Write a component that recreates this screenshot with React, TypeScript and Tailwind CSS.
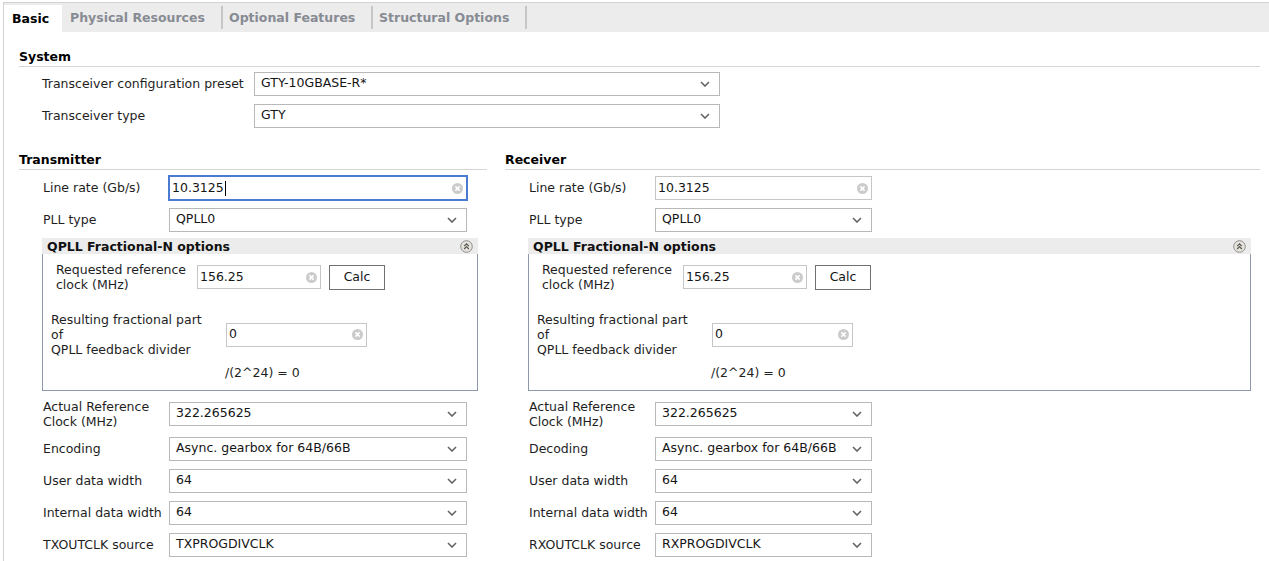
import React from 'react';

function Chevron() {
  return (
    <svg width="10" height="6" viewBox="0 0 10 6" className="shrink-0">
      <path d="M1 1 L5 5 L9 1" fill="none" stroke="#646464" strokeWidth="1.6" />
    </svg>
  );
}

function ClearIcon() {
  return (
    <svg width="11" height="11" viewBox="0 0 11 11" className="shrink-0">
      <circle cx="5.5" cy="5.5" r="5.5" fill="#cbcbcb" />
      <path d="M3.4 3.4 L7.6 7.6 M7.6 3.4 L3.4 7.6" stroke="#fff" strokeWidth="1.6" />
    </svg>
  );
}

function CollapseIcon() {
  return (
    <svg width="13" height="13" viewBox="0 0 13 13" className="shrink-0">
      <circle cx="6.5" cy="6.5" r="5.8" fill="#e6e3dc" stroke="#8e8e8e" strokeWidth="1" />
      <path d="M4.2 6.2 L6.5 3.9 L8.8 6.2 M4.2 9 L6.5 6.7 L8.8 9" fill="none" stroke="#555" strokeWidth="1.2" />
    </svg>
  );
}

function Select({ value, className }: { value: string; className: string }) {
  return (
    <div className={`h-[24px] flex items-center justify-between border border-[#b8b8b8] bg-white pl-[6px] pr-[9px] ${className}`}>
      <span className="text-[#151515] whitespace-nowrap pb-[1px]">{value}</span>
      <Chevron />
    </div>
  );
}

function TextInput({ value, className, focused }: { value: string; className: string; focused?: boolean }) {
  return (
    <div
      className={`h-[24px] flex items-center justify-between bg-white pl-[2px] pr-[3px] border ${
        focused ? 'border-[#4a7bd0] ring-1 ring-[#4a7bd0]' : 'border-[#c6c6c6]'
      } ${className}`}
    >
      <span className="flex items-center text-[#151515]">
        {value}
        {focused && <span className="ml-[1px] w-[1px] h-[15px] bg-black" />}
      </span>
      <ClearIcon />
    </div>
  );
}

function Header({ children, className = '' }: { children: React.ReactNode; className?: string }) {
  return (
    <div className={`border-b border-[#d6d6d6] pt-[1px] pb-[2px] font-bold leading-[15px] text-black ${className}`}>
      {children}
    </div>
  );
}

function Row({ label, labelW, children, tall }: { label: React.ReactNode; labelW: string; children: React.ReactNode; tall?: boolean }) {
  return (
    <div className={`flex items-center ${tall ? 'h-[30px]' : 'h-[24px]'}`}>
      <div className={`${labelW} leading-[15px] shrink-0 whitespace-nowrap pb-[1px]`}>{label}</div>
      {children}
    </div>
  );
}

function Side({ title, w, enc, encLabel, outLabel, outValue, focused }: {
  title: string;
  w: string;
  enc: string;
  encLabel: string;
  outLabel: string;
  outValue: string;
  focused?: boolean;
}) {
  return (
    <div className="flex flex-col">
      <Header>{title}</Header>
      <div className="mt-[6px] pl-[24px] flex flex-col gap-[8px]">
        <Row label="Line rate (Gb/s)" labelW="w-[126px]">
          <TextInput value="10.3125" className={w} focused={focused} />
        </Row>
        <Row label="PLL type" labelW="w-[126px]">
          <Select value="QPLL0" className={w} />
        </Row>
      </div>

      <div className="mt-[6px] ml-[23px] mr-[9px]">
        <div className="h-[16px] bg-[#ececec] flex items-center justify-between pl-[5px] pr-[5px]">
          <span className="font-bold leading-[16px] pt-[2px] text-[#111]">QPLL Fractional-N options</span>
          <CollapseIcon />
        </div>
        <div className="border-x border-b border-[#8d98ab] pt-[8px] pb-[10px]">
          <div className="flex items-center h-[30px] pl-[13px]">
            <div className="w-[141px] leading-[15px] shrink-0 whitespace-nowrap">
              Requested reference
              <br />
              clock (MHz)
            </div>
            <TextInput value="156.25" className="w-[124px] h-[23px]" />
            <div className="ml-[8px] w-[56px] h-[25px] border border-[#707070] bg-white flex items-center justify-center text-[#151515]">
              Calc
            </div>
          </div>
          <div className="mt-[20px] flex items-center h-[45px] pl-[8px]">
            <div className="w-[175px] leading-[15px] shrink-0 whitespace-nowrap">
              Resulting fractional part
              <br />
              of
              <br />
              QPLL feedback divider
            </div>
            <TextInput value="0" className="w-[141px] h-[23px]" />
          </div>
          <div className="mt-[8px] pl-[182px] leading-[15px]">/(2^24) = 0</div>
        </div>
      </div>

      <div className="mt-[8px] pl-[24px] flex flex-col gap-[8px]">
        <Row
          tall
          label={
            <>
              Actual Reference
              <br />
              Clock (MHz)
            </>
          }
          labelW="w-[126px]"
        >
          <Select value="322.265625" className={w} />
        </Row>
        <Row label={encLabel} labelW="w-[126px]">
          <Select value={enc} className={w} />
        </Row>
        <Row label="User data width" labelW="w-[126px]">
          <Select value="64" className={w} />
        </Row>
        <Row label="Internal data width" labelW="w-[126px]">
          <Select value="64" className={w} />
        </Row>
        <Row label={outLabel} labelW="w-[126px]">
          <Select value={outValue} className={w} />
        </Row>
      </div>
    </div>
  );
}

const tabs = [
  { name: 'Physical Resources', w: 'w-[159px] pl-[8px]' },
  { name: 'Optional Features', w: 'w-[148px] pl-[6px]' },
  { name: 'Structural Options', w: 'w-[152px] pl-[6px]' },
];

export default function App() {
  return (
    <div className="w-[1269px] h-[561px] overflow-hidden bg-white font-['DejaVu_Sans',sans-serif] text-[12.5px] text-[#1e1e1e]">
      <div className="ml-[3px] mt-[2px] h-[559px] border-l border-t border-[#d2d2d2] flex flex-col">
        {/* tab strip */}
        <div className="h-[29px] bg-[#ececec] flex items-stretch shrink-0">
          <div className="mt-[2px] pt-[1px] w-[58px] pl-[8px] bg-white flex items-center font-bold text-black">Basic</div>
          {tabs.map((t) => (
            <React.Fragment key={t.name}>
              <div className={`${t.w} pt-[2px] flex items-center font-bold text-[#878b93] whitespace-nowrap`}>{t.name}</div>
              <div className="w-[2px] h-[23px] self-center bg-[#c6c6c6]" />
            </React.Fragment>
          ))}
        </div>

        <div className="pl-[15px] pr-[9px]">
          <Header className="mt-[16px]">System</Header>
          <div className="mt-[5px] pl-[23px] flex flex-col gap-[8px]">
            <Row label="Transceiver configuration preset" labelW="w-[212px]">
              <Select value="GTY-10GBASE-R*" className="w-[466px]" />
            </Row>
            <Row label="Transceiver type" labelW="w-[212px]">
              <Select value="GTY" className="w-[466px]" />
            </Row>
          </div>

          <div className="mt-[23px] grid grid-cols-[468px_1fr] gap-x-[18px]">
            <Side
              title="Transmitter"
              w="w-[298px]"
              focused
              encLabel="Encoding"
              enc="Async. gearbox for 64B/66B"
              outLabel="TXOUTCLK source"
              outValue="TXPROGDIVCLK"
            />
            <Side
              title="Receiver"
              w="w-[217px]"
              encLabel="Decoding"
              enc="Async. gearbox for 64B/66B"
              outLabel="RXOUTCLK source"
              outValue="RXPROGDIVCLK"
            />
          </div>
        </div>
      </div>
    </div>
  );
}
